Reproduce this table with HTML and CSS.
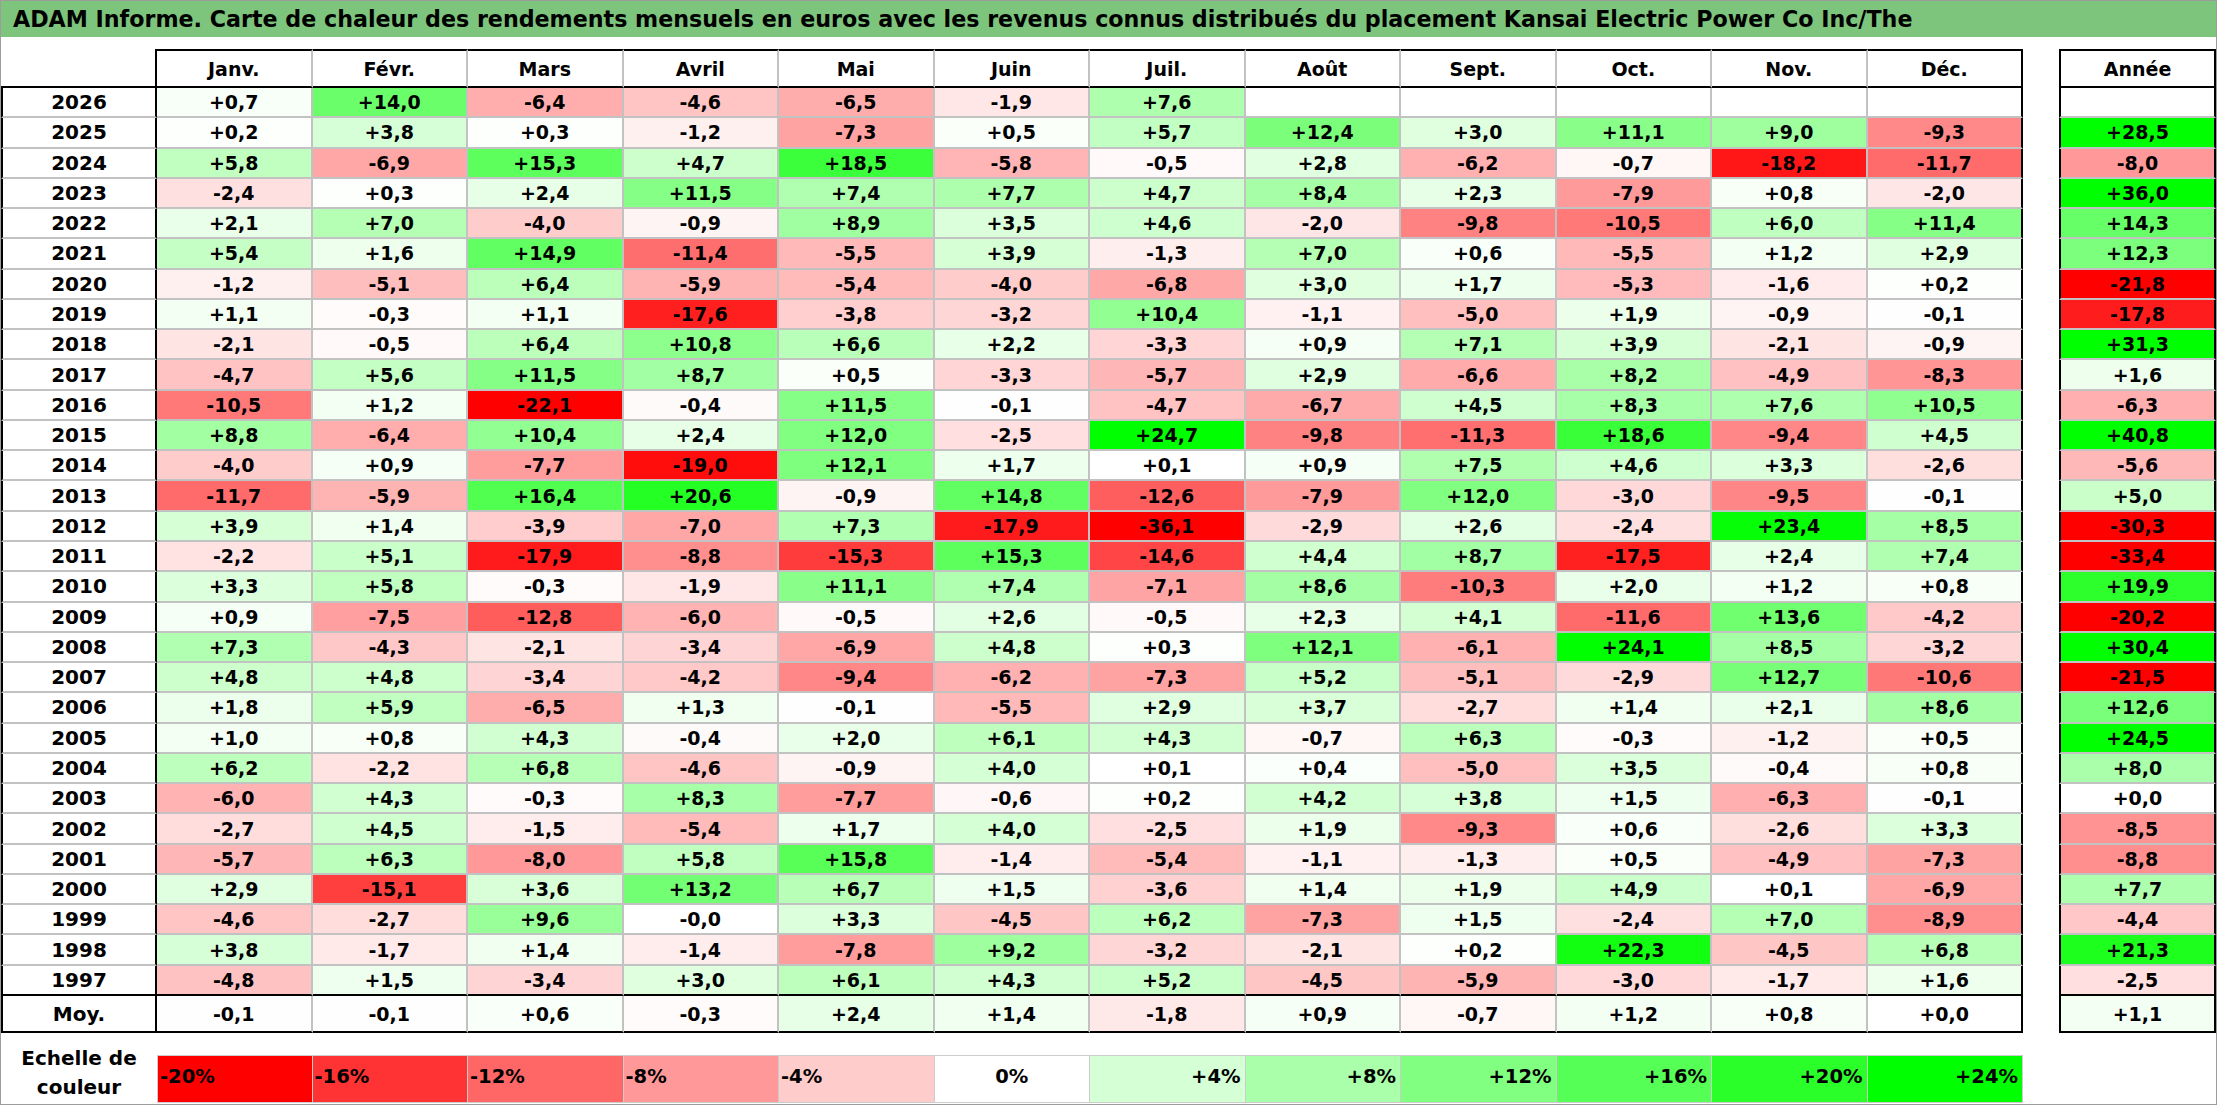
FILE: index.html
```html
<!DOCTYPE html>
<html lang="fr">
<head>
<meta charset="utf-8">
<title>ADAM Informe</title>
<link rel="stylesheet" href="styles.css">
</head>
<body>
<div class="sheet">
  <div class="title">ADAM Informe. Carte de chaleur des rendements mensuels en euros avec les revenus connus distribués du placement Kansai Electric Power Co Inc/The</div>
  <div class="tables">
    <div class="grid main">
      <div class="row head"><div class="corner"></div><div>Janv.</div><div>Févr.</div><div>Mars</div><div>Avril</div><div>Mai</div><div>Juin</div><div>Juil.</div><div>Août</div><div>Sept.</div><div>Oct.</div><div>Nov.</div><div>Déc.</div></div>
      <div class="row"><div class="y">2026</div><div class="v">+0,7</div><div class="v">+14,0</div><div class="v">-6,4</div><div class="v">-4,6</div><div class="v">-6,5</div><div class="v">-1,9</div><div class="v">+7,6</div><div class="v"></div><div class="v"></div><div class="v"></div><div class="v"></div><div class="v"></div></div>
      <div class="row"><div class="y">2025</div><div class="v">+0,2</div><div class="v">+3,8</div><div class="v">+0,3</div><div class="v">-1,2</div><div class="v">-7,3</div><div class="v">+0,5</div><div class="v">+5,7</div><div class="v">+12,4</div><div class="v">+3,0</div><div class="v">+11,1</div><div class="v">+9,0</div><div class="v">-9,3</div></div>
      <div class="row"><div class="y">2024</div><div class="v">+5,8</div><div class="v">-6,9</div><div class="v">+15,3</div><div class="v">+4,7</div><div class="v">+18,5</div><div class="v">-5,8</div><div class="v">-0,5</div><div class="v">+2,8</div><div class="v">-6,2</div><div class="v">-0,7</div><div class="v">-18,2</div><div class="v">-11,7</div></div>
      <div class="row"><div class="y">2023</div><div class="v">-2,4</div><div class="v">+0,3</div><div class="v">+2,4</div><div class="v">+11,5</div><div class="v">+7,4</div><div class="v">+7,7</div><div class="v">+4,7</div><div class="v">+8,4</div><div class="v">+2,3</div><div class="v">-7,9</div><div class="v">+0,8</div><div class="v">-2,0</div></div>
      <div class="row"><div class="y">2022</div><div class="v">+2,1</div><div class="v">+7,0</div><div class="v">-4,0</div><div class="v">-0,9</div><div class="v">+8,9</div><div class="v">+3,5</div><div class="v">+4,6</div><div class="v">-2,0</div><div class="v">-9,8</div><div class="v">-10,5</div><div class="v">+6,0</div><div class="v">+11,4</div></div>
      <div class="row"><div class="y">2021</div><div class="v">+5,4</div><div class="v">+1,6</div><div class="v">+14,9</div><div class="v">-11,4</div><div class="v">-5,5</div><div class="v">+3,9</div><div class="v">-1,3</div><div class="v">+7,0</div><div class="v">+0,6</div><div class="v">-5,5</div><div class="v">+1,2</div><div class="v">+2,9</div></div>
      <div class="row"><div class="y">2020</div><div class="v">-1,2</div><div class="v">-5,1</div><div class="v">+6,4</div><div class="v">-5,9</div><div class="v">-5,4</div><div class="v">-4,0</div><div class="v">-6,8</div><div class="v">+3,0</div><div class="v">+1,7</div><div class="v">-5,3</div><div class="v">-1,6</div><div class="v">+0,2</div></div>
      <div class="row"><div class="y">2019</div><div class="v">+1,1</div><div class="v">-0,3</div><div class="v">+1,1</div><div class="v">-17,6</div><div class="v">-3,8</div><div class="v">-3,2</div><div class="v">+10,4</div><div class="v">-1,1</div><div class="v">-5,0</div><div class="v">+1,9</div><div class="v">-0,9</div><div class="v">-0,1</div></div>
      <div class="row"><div class="y">2018</div><div class="v">-2,1</div><div class="v">-0,5</div><div class="v">+6,4</div><div class="v">+10,8</div><div class="v">+6,6</div><div class="v">+2,2</div><div class="v">-3,3</div><div class="v">+0,9</div><div class="v">+7,1</div><div class="v">+3,9</div><div class="v">-2,1</div><div class="v">-0,9</div></div>
      <div class="row"><div class="y">2017</div><div class="v">-4,7</div><div class="v">+5,6</div><div class="v">+11,5</div><div class="v">+8,7</div><div class="v">+0,5</div><div class="v">-3,3</div><div class="v">-5,7</div><div class="v">+2,9</div><div class="v">-6,6</div><div class="v">+8,2</div><div class="v">-4,9</div><div class="v">-8,3</div></div>
      <div class="row"><div class="y">2016</div><div class="v">-10,5</div><div class="v">+1,2</div><div class="v">-22,1</div><div class="v">-0,4</div><div class="v">+11,5</div><div class="v">-0,1</div><div class="v">-4,7</div><div class="v">-6,7</div><div class="v">+4,5</div><div class="v">+8,3</div><div class="v">+7,6</div><div class="v">+10,5</div></div>
      <div class="row"><div class="y">2015</div><div class="v">+8,8</div><div class="v">-6,4</div><div class="v">+10,4</div><div class="v">+2,4</div><div class="v">+12,0</div><div class="v">-2,5</div><div class="v">+24,7</div><div class="v">-9,8</div><div class="v">-11,3</div><div class="v">+18,6</div><div class="v">-9,4</div><div class="v">+4,5</div></div>
      <div class="row"><div class="y">2014</div><div class="v">-4,0</div><div class="v">+0,9</div><div class="v">-7,7</div><div class="v">-19,0</div><div class="v">+12,1</div><div class="v">+1,7</div><div class="v">+0,1</div><div class="v">+0,9</div><div class="v">+7,5</div><div class="v">+4,6</div><div class="v">+3,3</div><div class="v">-2,6</div></div>
      <div class="row"><div class="y">2013</div><div class="v">-11,7</div><div class="v">-5,9</div><div class="v">+16,4</div><div class="v">+20,6</div><div class="v">-0,9</div><div class="v">+14,8</div><div class="v">-12,6</div><div class="v">-7,9</div><div class="v">+12,0</div><div class="v">-3,0</div><div class="v">-9,5</div><div class="v">-0,1</div></div>
      <div class="row"><div class="y">2012</div><div class="v">+3,9</div><div class="v">+1,4</div><div class="v">-3,9</div><div class="v">-7,0</div><div class="v">+7,3</div><div class="v">-17,9</div><div class="v">-36,1</div><div class="v">-2,9</div><div class="v">+2,6</div><div class="v">-2,4</div><div class="v">+23,4</div><div class="v">+8,5</div></div>
      <div class="row"><div class="y">2011</div><div class="v">-2,2</div><div class="v">+5,1</div><div class="v">-17,9</div><div class="v">-8,8</div><div class="v">-15,3</div><div class="v">+15,3</div><div class="v">-14,6</div><div class="v">+4,4</div><div class="v">+8,7</div><div class="v">-17,5</div><div class="v">+2,4</div><div class="v">+7,4</div></div>
      <div class="row"><div class="y">2010</div><div class="v">+3,3</div><div class="v">+5,8</div><div class="v">-0,3</div><div class="v">-1,9</div><div class="v">+11,1</div><div class="v">+7,4</div><div class="v">-7,1</div><div class="v">+8,6</div><div class="v">-10,3</div><div class="v">+2,0</div><div class="v">+1,2</div><div class="v">+0,8</div></div>
      <div class="row"><div class="y">2009</div><div class="v">+0,9</div><div class="v">-7,5</div><div class="v">-12,8</div><div class="v">-6,0</div><div class="v">-0,5</div><div class="v">+2,6</div><div class="v">-0,5</div><div class="v">+2,3</div><div class="v">+4,1</div><div class="v">-11,6</div><div class="v">+13,6</div><div class="v">-4,2</div></div>
      <div class="row"><div class="y">2008</div><div class="v">+7,3</div><div class="v">-4,3</div><div class="v">-2,1</div><div class="v">-3,4</div><div class="v">-6,9</div><div class="v">+4,8</div><div class="v">+0,3</div><div class="v">+12,1</div><div class="v">-6,1</div><div class="v">+24,1</div><div class="v">+8,5</div><div class="v">-3,2</div></div>
      <div class="row"><div class="y">2007</div><div class="v">+4,8</div><div class="v">+4,8</div><div class="v">-3,4</div><div class="v">-4,2</div><div class="v">-9,4</div><div class="v">-6,2</div><div class="v">-7,3</div><div class="v">+5,2</div><div class="v">-5,1</div><div class="v">-2,9</div><div class="v">+12,7</div><div class="v">-10,6</div></div>
      <div class="row"><div class="y">2006</div><div class="v">+1,8</div><div class="v">+5,9</div><div class="v">-6,5</div><div class="v">+1,3</div><div class="v">-0,1</div><div class="v">-5,5</div><div class="v">+2,9</div><div class="v">+3,7</div><div class="v">-2,7</div><div class="v">+1,4</div><div class="v">+2,1</div><div class="v">+8,6</div></div>
      <div class="row"><div class="y">2005</div><div class="v">+1,0</div><div class="v">+0,8</div><div class="v">+4,3</div><div class="v">-0,4</div><div class="v">+2,0</div><div class="v">+6,1</div><div class="v">+4,3</div><div class="v">-0,7</div><div class="v">+6,3</div><div class="v">-0,3</div><div class="v">-1,2</div><div class="v">+0,5</div></div>
      <div class="row"><div class="y">2004</div><div class="v">+6,2</div><div class="v">-2,2</div><div class="v">+6,8</div><div class="v">-4,6</div><div class="v">-0,9</div><div class="v">+4,0</div><div class="v">+0,1</div><div class="v">+0,4</div><div class="v">-5,0</div><div class="v">+3,5</div><div class="v">-0,4</div><div class="v">+0,8</div></div>
      <div class="row"><div class="y">2003</div><div class="v">-6,0</div><div class="v">+4,3</div><div class="v">-0,3</div><div class="v">+8,3</div><div class="v">-7,7</div><div class="v">-0,6</div><div class="v">+0,2</div><div class="v">+4,2</div><div class="v">+3,8</div><div class="v">+1,5</div><div class="v">-6,3</div><div class="v">-0,1</div></div>
      <div class="row"><div class="y">2002</div><div class="v">-2,7</div><div class="v">+4,5</div><div class="v">-1,5</div><div class="v">-5,4</div><div class="v">+1,7</div><div class="v">+4,0</div><div class="v">-2,5</div><div class="v">+1,9</div><div class="v">-9,3</div><div class="v">+0,6</div><div class="v">-2,6</div><div class="v">+3,3</div></div>
      <div class="row"><div class="y">2001</div><div class="v">-5,7</div><div class="v">+6,3</div><div class="v">-8,0</div><div class="v">+5,8</div><div class="v">+15,8</div><div class="v">-1,4</div><div class="v">-5,4</div><div class="v">-1,1</div><div class="v">-1,3</div><div class="v">+0,5</div><div class="v">-4,9</div><div class="v">-7,3</div></div>
      <div class="row"><div class="y">2000</div><div class="v">+2,9</div><div class="v">-15,1</div><div class="v">+3,6</div><div class="v">+13,2</div><div class="v">+6,7</div><div class="v">+1,5</div><div class="v">-3,6</div><div class="v">+1,4</div><div class="v">+1,9</div><div class="v">+4,9</div><div class="v">+0,1</div><div class="v">-6,9</div></div>
      <div class="row"><div class="y">1999</div><div class="v">-4,6</div><div class="v">-2,7</div><div class="v">+9,6</div><div class="v">-0,0</div><div class="v">+3,3</div><div class="v">-4,5</div><div class="v">+6,2</div><div class="v">-7,3</div><div class="v">+1,5</div><div class="v">-2,4</div><div class="v">+7,0</div><div class="v">-8,9</div></div>
      <div class="row"><div class="y">1998</div><div class="v">+3,8</div><div class="v">-1,7</div><div class="v">+1,4</div><div class="v">-1,4</div><div class="v">-7,8</div><div class="v">+9,2</div><div class="v">-3,2</div><div class="v">-2,1</div><div class="v">+0,2</div><div class="v">+22,3</div><div class="v">-4,5</div><div class="v">+6,8</div></div>
      <div class="row last"><div class="y">1997</div><div class="v">-4,8</div><div class="v">+1,5</div><div class="v">-3,4</div><div class="v">+3,0</div><div class="v">+6,1</div><div class="v">+4,3</div><div class="v">+5,2</div><div class="v">-4,5</div><div class="v">-5,9</div><div class="v">-3,0</div><div class="v">-1,7</div><div class="v">+1,6</div></div>
      <div class="row moy"><div class="y">Moy.</div><div class="v">-0,1</div><div class="v">-0,1</div><div class="v">+0,6</div><div class="v">-0,3</div><div class="v">+2,4</div><div class="v">+1,4</div><div class="v">-1,8</div><div class="v">+0,9</div><div class="v">-0,7</div><div class="v">+1,2</div><div class="v">+0,8</div><div class="v">+0,0</div></div>
    </div>
    <div class="grid annee">
      <div class="row head"><div>Année</div></div>
      <div class="row"><div class="v"></div></div>
      <div class="row"><div class="v">+28,5</div></div>
      <div class="row"><div class="v">-8,0</div></div>
      <div class="row"><div class="v">+36,0</div></div>
      <div class="row"><div class="v">+14,3</div></div>
      <div class="row"><div class="v">+12,3</div></div>
      <div class="row"><div class="v">-21,8</div></div>
      <div class="row"><div class="v">-17,8</div></div>
      <div class="row"><div class="v">+31,3</div></div>
      <div class="row"><div class="v">+1,6</div></div>
      <div class="row"><div class="v">-6,3</div></div>
      <div class="row"><div class="v">+40,8</div></div>
      <div class="row"><div class="v">-5,6</div></div>
      <div class="row"><div class="v">+5,0</div></div>
      <div class="row"><div class="v">-30,3</div></div>
      <div class="row"><div class="v">-33,4</div></div>
      <div class="row"><div class="v">+19,9</div></div>
      <div class="row"><div class="v">-20,2</div></div>
      <div class="row"><div class="v">+30,4</div></div>
      <div class="row"><div class="v">-21,5</div></div>
      <div class="row"><div class="v">+12,6</div></div>
      <div class="row"><div class="v">+24,5</div></div>
      <div class="row"><div class="v">+8,0</div></div>
      <div class="row"><div class="v">+0,0</div></div>
      <div class="row"><div class="v">-8,5</div></div>
      <div class="row"><div class="v">-8,8</div></div>
      <div class="row"><div class="v">+7,7</div></div>
      <div class="row"><div class="v">-4,4</div></div>
      <div class="row"><div class="v">+21,3</div></div>
      <div class="row last"><div class="v">-2,5</div></div>
      <div class="row moy"><div class="v">+1,1</div></div>
    </div>
  </div>
  <div class="legend">
    <div class="lab">Echelle de<br>couleur</div>
    <div class="lg neg">-20%</div>
    <div class="lg neg">-16%</div>
    <div class="lg neg">-12%</div>
    <div class="lg neg">-8%</div>
    <div class="lg neg">-4%</div>
    <div class="lg zero">0%</div>
    <div class="lg pos">+4%</div>
    <div class="lg pos">+8%</div>
    <div class="lg pos">+12%</div>
    <div class="lg pos">+16%</div>
    <div class="lg pos">+20%</div>
    <div class="lg pos">+24%</div>
  </div>
</div>
<script src="script.js"></script>
</body>
</html>
```

FILE: styles.css
```css
* { box-sizing: border-box; }
html, body { margin: 0; padding: 0; background: #ffffff; }
body {
  font-family: "DejaVu Sans", Verdana, sans-serif;
  font-weight: bold;
  color: #000;
}
.sheet {
  width: 2217px;
  height: 1105px;
  border: 1px solid #9c9c9c;
  background: #fff;
  overflow: hidden;
}
.title {
  height: 36px;
  background: #7dc57d;
  font-size: 22.2px;
  line-height: 36px;
  padding-left: 12px;
  white-space: nowrap;
  letter-spacing: 0;
}
.tables {
  display: flex;
  margin-top: 12px;
}
.grid {
  display: grid;
  grid-template-rows: 39px repeat(30, 30.27px) 37.5px;
}
.main {
  width: 2022px;
  grid-template-columns: 156px repeat(12, 1fr);
}
.annee {
  width: 157px;
  margin-left: 36px;
  grid-template-columns: 1fr;
}
.row { display: contents; }
.row > div {
  display: flex;
  align-items: center;
  justify-content: center;
  font-size: 19px;
  border-right: 2px solid #c2c2c2;
  border-bottom: 2px solid #c2c2c2;
  white-space: nowrap;
}
.row > div:last-child { border-right-color: #000; }
.head > div {
  border-top: 2px solid #000;
  border-bottom-color: #000;
}
.head > .corner {
  border-top: none;
  border-right-color: #000;
}
.main .row > .y {
  font-size: 20px;
  border-left: 2px solid #000;
  border-right-color: #000;
}
.annee .row > div { border-left: 2px solid #000; }
.last > div, .moy > div { border-bottom-color: #000; }
.moy > div { border-bottom-width: 2px; }

.legend {
  display: grid;
  width: 2022px;
  height: 48px;
  margin-top: 22px;
  grid-template-columns: 156px repeat(12, 1fr);
}
.lab {
  height: 58px;
  margin-top: -11px;
  font-size: 20px;
  line-height: 29px;
  text-align: center;
  padding-top: 0;
}
.lg {
  display: flex;
  align-items: center;
  font-size: 19.5px;
  border: 1px solid #cccccc;
  border-left: none;
  padding-bottom: 6px;
}
.lg.neg { justify-content: flex-start; padding-left: 2px; }
.lg.zero { justify-content: center; }
.lg.pos { justify-content: flex-end; padding-right: 4px; }
.lg:nth-child(2) { border-left: 1px solid #cccccc; }
```

FILE: script.js
```js
(function () {
  function colour(v) {
    var r = 255, g = 255, b = 255, c;
    if (v < 0) {
      c = Math.round(255 * (1 - Math.min(1, -v / 20)));
      g = c; b = c;
    } else if (v > 0) {
      c = Math.round(255 * (1 - Math.min(1, v / 24)));
      r = c; b = c;
    }
    return 'rgb(' + r + ',' + g + ',' + b + ')';
  }
  var cells = document.querySelectorAll('.v, .lg');
  for (var i = 0; i < cells.length; i++) {
    var t = cells[i].textContent.trim();
    if (!t) continue;
    var v = parseFloat(t.replace('%', '').replace(',', '.'));
    if (isNaN(v)) continue;
    cells[i].style.backgroundColor = colour(v);
  }
})();
```
